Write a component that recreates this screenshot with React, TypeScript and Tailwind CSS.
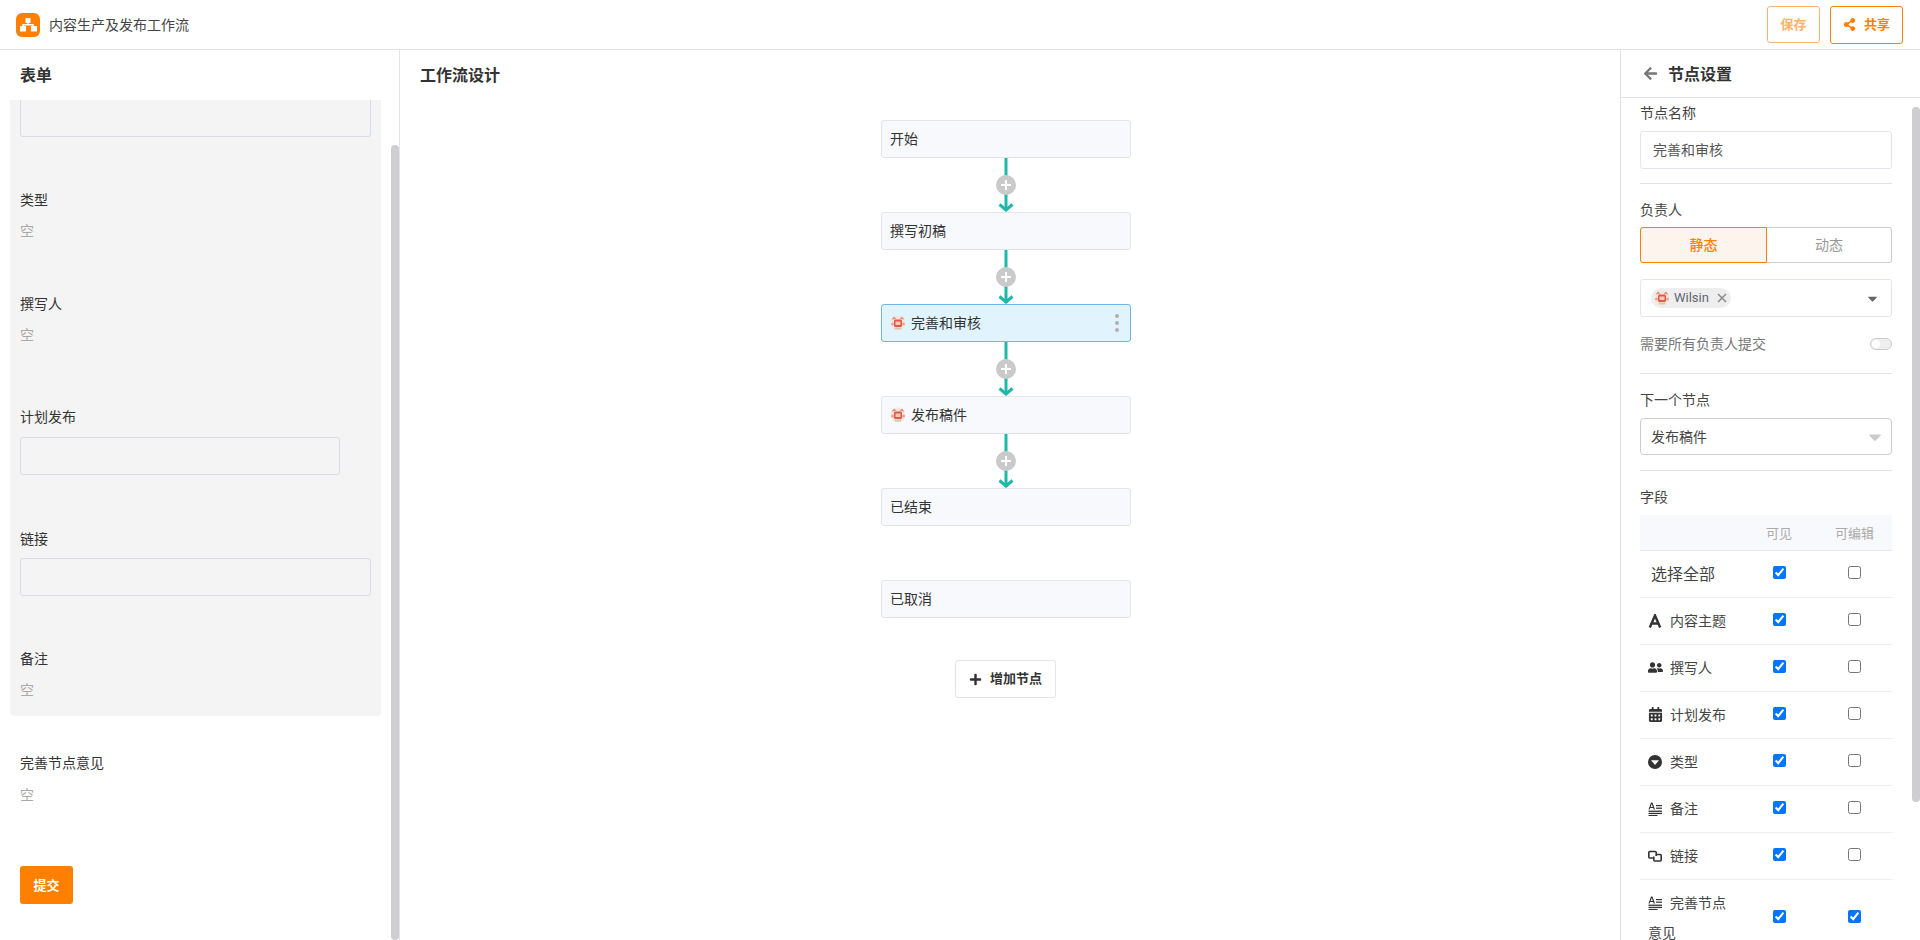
import { FaShareAlt, FaArrowLeft, FaPlus, FaUserFriends, FaCalendarAlt, FaCaretDown } from 'react-icons/fa'

const Avatar = () => (
  <svg width="16" height="16" viewBox="0 0 16 16" className="shrink-0">
    <circle cx="8" cy="8" r="7.5" fill="#f7e6df" />
    <path d="M1.5 4.5 L4 1.5 L6.5 4 Z M14.5 4.5 L12 1.5 L9.5 4 Z" fill="#e58f7e" />
    <rect x="4" y="4.5" width="8" height="7.5" rx="1.5" fill="#dc5a47" />
    <rect x="5.5" y="6.5" width="5" height="3.5" fill="#f6c8b9" />
    <circle cx="2.5" cy="9" r="1.5" fill="#eba595" />
    <circle cx="13.5" cy="9" r="1.5" fill="#eba595" />
    <rect x="4.5" y="12.5" width="7" height="2" rx="1" fill="#d9c6ae" />
  </svg>
)

const Logo = () => (
  <svg width="24" height="24" viewBox="0 0 24 24">
    <rect width="24" height="24" rx="6" fill="#ff8000" />
    <path d="M12 9 V12 M7 14 V11.7 H17 V14" stroke="#fff" strokeWidth="1.4" fill="none" />
    <rect x="9.5" y="5" width="5" height="5" fill="#fff" />
    <rect x="4" y="13" width="6" height="5.5" fill="#fff" />
    <rect x="15" y="13" width="6" height="5.5" fill="#fff" />
  </svg>
)

const FontIcon = () => (
  <svg width="14" height="14" viewBox="0 0 14 14" className="inline-block shrink-0 align-[-2px]" fill="none" stroke="#333" strokeWidth="2.4">
    <path d="M1.8 13.5 L7 1.5 L12.2 13.5 M3.8 9.5 H10.2" />
  </svg>
)

const TextIcon = () => (
  <svg width="14" height="14" viewBox="0 0 14 14" className="inline-block shrink-0 align-[-2px]" fill="#333">
    <path d="M0.5 7.5 L3 0.5 H4.4 L7 7.5 H5.7 L5.2 6 H2.2 L1.7 7.5 Z M2.6 4.9 H4.8 L3.7 1.9 Z" />
    <rect x="8" y="3" width="6" height="1.2" />
    <rect x="8" y="5.6" width="6" height="1.2" />
    <rect x="0.5" y="8.6" width="13.5" height="1.3" />
    <rect x="0.5" y="10.8" width="13.5" height="1.3" />
    <rect x="0.5" y="13" width="9" height="1" />
  </svg>
)

const TypeIcon = () => (
  <svg width="14" height="14" viewBox="0 0 14 14" className="inline-block shrink-0 align-[-2px]">
    <circle cx="7" cy="7" r="7" fill="#333" />
    <path d="M3 5.2 H11 L7 10 Z" fill="#fff" />
  </svg>
)

const LinkIcon = () => (
  <svg width="14" height="14" viewBox="0 0 14 14" className="inline-block shrink-0 align-[-2px]" fill="none" stroke="#333" strokeWidth="1.6">
    <path d="M6 9 H1.8 Q0.8 9 0.8 8 V3.5 Q0.8 2.5 1.8 2.5 H7.2 Q8.2 2.5 8.2 3.5 V7" />
    <path d="M8 5.5 H12.2 Q13.2 5.5 13.2 6.5 V11 Q13.2 12 12.2 12 H6.8 Q5.8 12 5.8 11 V7.5" />
  </svg>
)

const Connector = () => (
  <svg width="30" height="54" viewBox="0 0 30 54" className="self-center">
    <path d="M15 0 V53" stroke="#1fb8a8" strokeWidth="3" />
    <path d="M8.5 46.5 L15 52 L21.5 46.5" stroke="#1fb8a8" strokeWidth="3" fill="none" />
    <circle cx="15" cy="27" r="10" fill="#cacaca" />
    <path d="M15 22 V32 M10 27 H20" stroke="#fff" strokeWidth="2" />
  </svg>
)

const FlowNode = ({ name, owner, active }: { name: string; owner?: boolean; active?: boolean }) => (
  <div
    className={
      active
        ? 'flex h-[38px] items-center gap-[5px] rounded-[3px] border border-[#6db8ea] bg-[#e1f4fe] px-2 text-sm text-[#333]'
        : 'flex h-[38px] items-center gap-[5px] rounded-[3px] border border-[#e3e5ec] bg-[#f8f9fd] px-2 text-sm text-[#333]'
    }
  >
    {owner && <Avatar />}
    <span>{name}</span>
    {active && (
      <div className="ml-auto mr-[3px] flex flex-col gap-[3px]">
        <span className="h-1 w-1 rounded-full bg-[#b0b0b8]" />
        <span className="h-1 w-1 rounded-full bg-[#b0b0b8]" />
        <span className="h-1 w-1 rounded-full bg-[#b0b0b8]" />
      </div>
    )}
  </div>
)

const FieldRow = ({ icon, label, editable }: { icon: React.ReactNode; label: string; editable?: boolean }) => (
  <div className="grid grid-cols-[101px_76px_75px] items-center border-b border-[#eee] text-sm text-[#444]">
    <div className="py-2 pl-2 pr-2 leading-[30px]">
      <span className="mr-2 inline-block w-[14px] text-[14px] text-[#333]">{icon}</span>
      {label}
    </div>
    <div className="mb-1 flex justify-center">
      <input type="checkbox" defaultChecked />
    </div>
    <div className="mb-1 flex justify-center">
      <input type="checkbox" defaultChecked={editable} />
    </div>
  </div>
)

export default function App() {
  return (
    <div className="flex h-[940px] w-[1920px] flex-col overflow-hidden bg-white font-['Noto_Sans','Noto_Sans_CJK_SC',sans-serif] text-[#333]">
      <header className="flex h-[50px] shrink-0 items-center border-b border-[#e3e3e3] pl-4 pr-[17px]">
        <Logo />
        <span className="ml-[9px] text-sm text-[#444]">内容生产及发布工作流</span>
        <button className="ml-auto h-[37px] w-[53px] rounded-[3px] border border-[#ffb26b] text-[13px] font-bold text-[#ffb26b]">保存</button>
        <button className="ml-[10px] flex h-[38px] w-[73px] items-center justify-center gap-2 rounded-[3px] border border-[#ff8000] text-[13px] font-bold text-[#ff8000]">
          <FaShareAlt size={13} />
          共享
        </button>
      </header>

      <div className="flex min-h-0 flex-1">
        <aside className="relative w-[400px] shrink-0 border-r border-[#e3e3e3]">
          <div className="flex h-[50px] items-center px-5 text-base font-semibold">表单</div>
          <div className="ml-[10px] h-[616px] w-[371px] rounded-b-[4px] bg-[#f4f4f4] px-[10px] text-sm leading-5">
            <div className="h-[37px] rounded-b-[3px] border border-t-0 border-[#d8dce4]" />
            <div className="mt-[53px]">类型</div>
            <div className="mt-[11px] text-[#aaa]">空</div>
            <div className="mt-[53px]">撰写人</div>
            <div className="mt-[11px] text-[#aaa]">空</div>
            <div className="mt-[62px]">计划发布</div>
            <div className="mt-[10px] h-[38px] w-[320px] rounded-[3px] border border-[#d8dce4]" />
            <div className="mt-[54px]">链接</div>
            <div className="mt-[9px] h-[38px] rounded-[3px] border border-[#d8dce4]" />
            <div className="mt-[53px]">备注</div>
            <div className="mt-[11px] text-[#aaa]">空</div>
          </div>
          <div className="px-5 pt-[37px] text-sm leading-5">
            <div>完善节点意见</div>
            <div className="mt-3 text-[#aaa]">空</div>
            <button className="mt-[61px] h-[38px] w-[53px] rounded-[3px] bg-[#ff8000] text-[13px] font-bold text-white">提交</button>
          </div>
          <div className="absolute right-0 top-[95px] h-[795px] w-2 rounded-full bg-[#cdcdd2]" />
        </aside>

        <main className="min-w-0 flex-1">
          <div className="flex h-[50px] items-center px-5 text-base font-semibold">工作流设计</div>
          <div className="ml-[481px] mt-5 flex w-[250px] flex-col">
            <FlowNode name="开始" />
            <Connector />
            <FlowNode name="撰写初稿" />
            <Connector />
            <FlowNode name="完善和审核" owner active />
            <Connector />
            <FlowNode name="发布稿件" owner />
            <Connector />
            <FlowNode name="已结束" />
            <div className="h-[54px]" />
            <FlowNode name="已取消" />
            <button className="ml-[74px] mt-[42px] flex h-[38px] w-[101px] items-center justify-center gap-2 self-start rounded-[3px] border border-[#e3e5ec] text-[13px] font-bold">
              <FaPlus size={13} />
              增加节点
            </button>
          </div>
        </main>

        <aside className="relative w-[300px] shrink-0 border-l border-[#e3e3e3]">
          <div className="flex h-[48px] items-center border-b border-[#e3e3e3] pl-[22px] text-base font-bold">
            <FaArrowLeft size={15} className="text-[#767676]" />
            <span className="ml-[10px]">节点设置</span>
          </div>
          <div className="ml-[19px] w-[252px] text-sm leading-5">
            <div className="mt-[5px] text-[#444]">节点名称</div>
            <div className="mt-2 flex h-[38px] items-center rounded-[3px] border border-[#e3e5ec] px-3 text-[#555]">完善和审核</div>
            <div className="mt-[14px] h-px bg-[#e3e3e3]" />
            <div className="mt-4 text-[#444]">负责人</div>
            <div className="mt-[7px] flex h-[36px]">
              <div className="flex w-[127px] items-center justify-center rounded-l-[3px] border border-[#ff8000] bg-[#fdf4ee] font-medium text-[#ff8000]">静态</div>
              <div className="flex flex-1 items-center justify-center rounded-r-[3px] border border-l-0 border-[#ccc] text-[#999]">动态</div>
            </div>
            <div className="mt-4 flex h-[38px] items-center rounded-[3px] border border-[#e3e5ec] pl-[10px] pr-[11px]">
              <div className="flex h-5 w-20 items-center rounded-full bg-[#eee] pl-[3px] font-['Roboto',sans-serif] text-[13px] text-[#5f6672]">
                <Avatar />
                <span className="ml-1">Wilsin</span>
                <svg width="10" height="10" viewBox="0 0 10 10" className="ml-2" stroke="#8a8a8a" strokeWidth="1.5">
                  <path d="M1 1 L9 9 M9 1 L1 9" />
                </svg>
              </div>
              <FaCaretDown size={15} className="ml-auto text-[#666]" />
            </div>
            <div className="mt-[17px] flex items-center justify-between text-[#777]">
              <span>需要所有负责人提交</span>
              <div className="flex h-3 w-[22px] items-center rounded-full border border-[#ccc] bg-[#eee] pl-[1px]">
                <span className="h-2 w-2 rounded-full bg-white" />
              </div>
            </div>
            <div className="mt-[19px] h-px bg-[#e3e3e3]" />
            <div className="mt-4 text-[#444]">下一个节点</div>
            <div className="mt-2 flex h-[37px] items-center rounded-[4px] border border-[#ccc] pl-[10px] pr-[6px] text-[#444]">
              发布稿件
              <FaCaretDown size={20} className="ml-auto text-[#ccc]" />
            </div>
            <div className="mt-[15px] h-px bg-[#e3e3e3]" />
            <div className="mt-4 text-[#444]">字段</div>
            <div className="mt-2 grid h-[36px] grid-cols-[101px_76px_75px] items-center border-b border-[#e8e8e8] bg-[#f8f9fd] text-center text-[13px] text-[#aaa]">
              <span />
              <span>可见</span>
              <span>可编辑</span>
            </div>
            <div className="grid h-[47px] grid-cols-[101px_76px_75px] items-center border-b border-[#eee]">
              <div className="pl-[11px] text-base text-[#444]">选择全部</div>
              <div className="mb-1 flex justify-center">
                <input type="checkbox" defaultChecked />
              </div>
              <div className="mb-1 flex justify-center">
                <input type="checkbox" />
              </div>
            </div>
            <FieldRow icon={<FontIcon />} label="内容主题" />
            <FieldRow icon={<FaUserFriends size={15} className="inline-block align-[-2px]" />} label="撰写人" />
            <FieldRow icon={<FaCalendarAlt size={15} className="inline-block align-[-2px]" />} label="计划发布" />
            <FieldRow icon={<TypeIcon />} label="类型" />
            <FieldRow icon={<TextIcon />} label="备注" />
            <FieldRow icon={<LinkIcon />} label="链接" />
            <FieldRow icon={<TextIcon />} label="完善节点意见" editable />
          </div>
          <div className="absolute right-0 top-[57px] h-[695px] w-2 rounded-full bg-[#cdcdd2]" />
        </aside>
      </div>
    </div>
  )
}
